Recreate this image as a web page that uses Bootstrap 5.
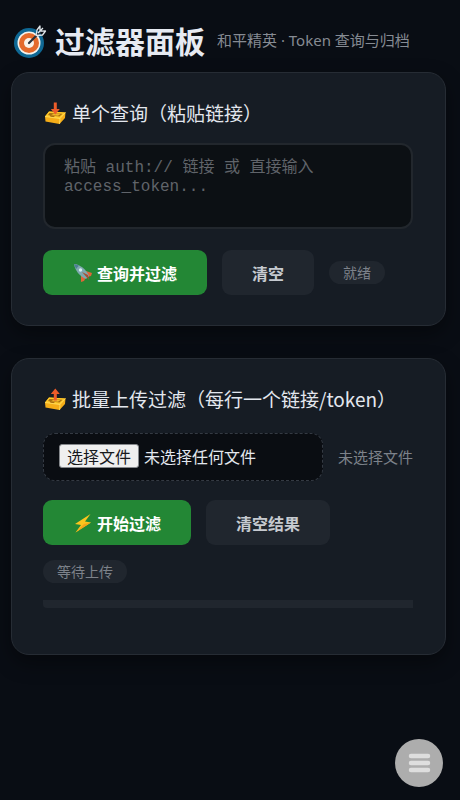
<!DOCTYPE html>
<html lang="zh-CN" data-bs-theme="dark">
<head>
<meta charset="utf-8">
<meta name="viewport" content="width=device-width, initial-scale=1">
<title>过滤器面板</title>
<link rel="stylesheet" href="https://cdn.jsdelivr.net/npm/bootstrap@5.3.0/dist/css/bootstrap.min.css">
<style>
body { font-family: "Noto Sans CJK SC", sans-serif; background: #090d14; color: #e3e7ee; }
.page { padding: 24px 14px 24px 11px; }
.page-head { margin-bottom: 12px; gap: 12px; }
.page-title { gap: 8px; font-size: 30px; line-height: 32px; height: 36px; font-weight: 700; color: #e6eaf2; }
.page-note { font-family: "Noto Sans", "Noto Sans CJK SC", sans-serif; font-size: 15px; line-height: 32px; color: #868b93; }
.panel { background: #161c24; border: 1px solid #262c34; border-radius: 18px; padding: 26px 32px 30px 31px; margin-bottom: 32px; box-shadow: 0 8px 20px rgba(0,0,0,.4); }
.panel-upload { padding-bottom: 46px; }
.panel-title { gap: 5px; margin-bottom: 16px; font-size: 19px; line-height: 28px; font-weight: 400; color: #e3e7ee; }
.panel-upload .panel-title { margin-bottom: 20px; }
.link-box { height: 86px; margin-bottom: 21px; padding: 14px 19px; border: 2px solid #22272d; border-radius: 12px; font-family: "Liberation Mono", "Noto Sans CJK SC", monospace; font-size: 16px; line-height: 19px; resize: none; }
.link-box, .link-box:focus { background: #0c1014; color: #e3e7ee; }
.link-box::placeholder { color: #60646a; }
.actions { gap: 15px; }
.actions-upload { margin: 19px 0 17px; }
.action { height: 45px; padding: 0 30px; border: 0; border-radius: 9px; font-size: 16px; line-height: 24px; font-weight: 700; }
.action-main { gap: 4px; }
.action-main, .action-main:hover { background: #238735; color: #fff; }
.action-plain, .action-plain:hover { background: #20262e; color: #c6cad0; }
.state { padding: 0 14px; font-size: 14px; line-height: 23px; font-weight: 400; background: #20262e; color: #7d828a; }
.picker { padding: 10px 15px 12px; border: 1px dashed #343a43; border-radius: 12px; background: #0a0d12; cursor: pointer; font-size: 16px; line-height: 22px; gap: 5px; }
.picker-face { padding: 0 7px; border: 1px solid #85888c; border-radius: 3px; background: #efefef; color: #17191c; }
.picked { font-size: 15px; line-height: 24px; color: #7d828a; }
.meter { height: 8px; border-radius: 0 0 0 4px; background: #20262e; }
.menu-fab { right: 17px; bottom: 13px; width: 48px; height: 48px; background: #adadad; }
.menu-fab:hover { background: #bcbcbc; }
</style>
<script src="https://cdn.jsdelivr.net/npm/bootstrap@5.3.0/dist/js/bootstrap.bundle.min.js" defer></script>
</head>
<body>
<svg class="d-none" aria-hidden="true">
  <symbol id="tray" viewBox="0 0 24 24">
    <path d="M2 15.500 6 10.500 22.500 11.500 22 17 16.500 23 2.500 20.500z" fill="#f5ad18"/>
    <path d="M2 15.500 6 10.500 22.500 11.500 17 17.500z" fill="#ffc928"/>
    <path d="M6.500 12 19.500 12.700 16.500 15.500 12 15l-1.500 1.300-3-.4L7 14.400l-2-.3z" fill="#a86f10"/>
    <path d="M8 14.200 11 12.500 17.500 13 15 14.800z" fill="#f0b52b"/>
    <path d="m2 15.500 15 2 5.500-6M17 17.500l-.5 5.500" fill="none" stroke="#ffdf63" stroke-width=".8"/>
  </symbol>
</svg>
<main class="page">
  <header class="page-head d-flex align-items-start">
    <h1 class="page-title mb-0 text-nowrap d-flex">
      <svg class="flex-shrink-0" width="36" height="36" viewBox="0 0 36 36" aria-hidden="true">
        <circle cx="18" cy="19" r="15" fill="#0f6894"/><circle cx="18" cy="19" r="11.500" fill="#f5f3ed"/>
        <circle cx="18" cy="19" r="10" fill="#e46a2b"/><circle cx="18" cy="19" r="5" fill="#f8f2e9"/>
        <path d="m18 19 12-12" stroke="#28313b" stroke-width="2.200" stroke-linecap="round"/>
        <path d="m25 12 1-6 3-4v5M25.500 11.500l6-.5 3-4-5 .2M27 9l5-5" fill="none" stroke="#dfe5ea" stroke-width="1.300" stroke-linejoin="round"/>
      </svg>过滤器面板</h1>
    <span class="page-note text-truncate">和平精英 · Token 查询与归档</span>
  </header>

  <section class="panel">
    <h2 class="panel-title d-flex align-items-center">
      <svg width="24" height="24" viewBox="0 0 24 24" aria-hidden="true"><use href="#tray"/><path d="M10.800 1.500h3V8h3l-4.500 5.500L7.800 8h3z" fill="#ed5c2a"/></svg>
      <label for="link">单个查询（粘贴链接）</label>
    </h2>
    <textarea id="link" class="form-control link-box" placeholder="粘贴 auth:// 链接 或 直接输入 access_token..."></textarea>
    <div class="actions d-flex flex-wrap align-items-center">
      <button type="button" class="btn action action-main d-flex align-items-center">
        <svg width="20" height="20" viewBox="0 0 20 20" aria-hidden="true">
          <path d="m8 12 0 7 3-1 2-4zM13 8l6 2-1 3-4 1z" fill="#df6538"/>
          <path d="M1 1c6 .5 12 5 15 12l-3 3C6 13 2 7 1 1z" fill="#7fa9af"/>
          <path d="M1 1l5 1.500L3 6z" fill="#4b7f92"/><circle cx="7.500" cy="7" r="1.700" fill="#d4eef1"/>
          <path d="m9 9 7 8-1-5z" fill="#a45135"/>
        </svg>查询并过滤</button>
      <button type="button" class="btn action action-plain">清空</button>
      <span class="badge rounded-pill state">就绪</span>
    </div>
  </section>

  <section class="panel panel-upload">
    <h2 class="panel-title d-flex align-items-center">
      <svg width="24" height="24" viewBox="0 0 24 24" aria-hidden="true"><use href="#tray"/><path d="M10.800 13.500V7h-3L12.300 1.500 16.800 7h-3v6.500z" fill="#ed5c2a"/></svg>
      <span class="text-nowrap">批量上传过滤（每行一个链接/token）</span>
    </h2>
    <div class="actions d-flex align-items-center">
      <label class="picker d-flex flex-grow-1 align-items-center position-relative" for="batch">
        <input id="batch" type="file" class="visually-hidden">
        <span class="picker-face">选择文件</span><span>未选择任何文件</span>
      </label>
      <span class="picked text-nowrap">未选择文件</span>
    </div>
    <div class="actions actions-upload d-flex flex-wrap align-items-center">
      <button type="button" class="btn action action-main d-flex align-items-center">
        <svg width="20" height="20" viewBox="0 0 20 20" aria-hidden="true"><path d="M17.500 1 2 11l6 1-5.500 7.500L18 9.500l-6-1z" fill="#fbc51e"/><path d="m2.500 19.500 8.500-8.500 7-1.500z" fill="#f3a51a"/></svg>开始过滤</button>
      <button type="button" class="btn action action-plain">清空结果</button>
      <span class="badge rounded-pill state">等待上传</span>
    </div>
    <div class="progress meter" role="progressbar" aria-label="上传进度" aria-valuenow="0" aria-valuemin="0" aria-valuemax="100"></div>
  </section>
</main>
<button type="button" class="btn menu-fab position-fixed rounded-circle border-0 p-0 d-flex align-items-center justify-content-center" aria-label="菜单">
  <svg width="24" height="24" viewBox="0 0 24 24" aria-hidden="true"><path d="M4 5h17M4 12h17M4 19h17" stroke="#dedede" stroke-width="4.500" stroke-linecap="round"/></svg>
</button>
</body>
</html>
